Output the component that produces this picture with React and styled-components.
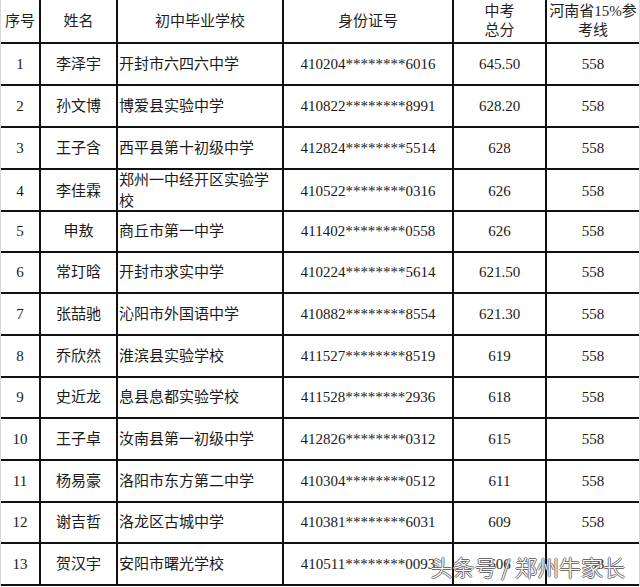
import React from "react";
import styled, { createGlobalStyle } from "styled-components";

const Global = createGlobalStyle`
  html, body { margin: 0; padding: 0; background: #fff; }
  body { font-family: "Liberation Serif", "Noto Sans CJK SC", serif; }
`;

const Page = styled.div`
  position: relative;
  width: 640px;
  height: 587px;
  overflow: hidden;
  background: #fff;
`;

const Table = styled.div`
  display: flex;
  flex-direction: column;
  border-left: 1px solid #d8d8d8;
  border-right: 1px solid #d8d8d8;
  box-sizing: border-box;
  width: 640px;
`;

const Row = styled.div`
  display: grid;
  grid-template-columns: 40px 77px 166px 170px 93px 1fr;
  height: ${(p) => p.$h}px;
  border-bottom: 2px solid #111;
  box-sizing: border-box;
`;

const Cell = styled.div`
  box-sizing: border-box;
  border-right: 2px solid #111;
  display: flex;
  align-items: center;
  justify-content: ${(p) => (p.$left ? "flex-start" : "center")};
  padding-left: ${(p) => (p.$left ? "1px" : "0")};
  text-align: ${(p) => (p.$left ? "left" : "center")};
  font-size: 15px;
  line-height: 21px;
  color: #1a1a1a;
  font-family: "Liberation Serif", "Noto Sans CJK SC", serif;
  overflow: visible;
  &:last-child { border-right: none; }
`;

const HeadCell = styled(Cell)`
  line-height: 19px;
  color: #1e1e1e;
`;

const Watermark = styled.div`
  position: absolute;
  right: 15px;
  bottom: 5px;
  font-family: "Noto Sans CJK SC", sans-serif;
  font-weight: 300;
  font-size: 22px;
  letter-spacing: 0;
  color: #fff;
  text-shadow: 1px 0 0 #6e6e6e, -1px 0 0 #6e6e6e, 0 1px 0 #6e6e6e, 0 -1px 0 #6e6e6e;
  pointer-events: none;
  white-space: nowrap;
`;

const rows = [
  ["1", "李泽宇", "开封市六四六中学", "410204********6016", "645.50", "558"],
  ["2", "孙文博", "博爱县实验中学", "410822********8991", "628.20", "558"],
  ["3", "王子含", "西平县第十初级中学", "412824********5514", "628", "558"],
  ["4", "李佳霖", "郑州一中经开区实验学校", "410522********0316", "626", "558"],
  ["5", "申敖", "商丘市第一中学", "411402********0558", "626", "558"],
  ["6", "常玎晗", "开封市求实中学", "410224********5614", "621.50", "558"],
  ["7", "张喆驰", "沁阳市外国语中学", "410882********8554", "621.30", "558"],
  ["8", "乔欣然", "淮滨县实验学校", "411527********8519", "619", "558"],
  ["9", "史近龙", "息县息都实验学校", "411528********2936", "618", "558"],
  ["10", "王子卓", "汝南县第一初级中学", "412826********0312", "615", "558"],
  ["11", "杨易豪", "洛阳市东方第二中学", "410304********0512", "611", "558"],
  ["12", "谢吉哲", "洛龙区古城中学", "410381********6031", "609", "558"],
  ["13", "贺汉宇", "安阳市曙光学校", "410511********0093", "606", "558"],
];

const heights = [42, 42, 42, 42, 41, 41, 42, 42, 41, 42, 42, 41, 42];

export default function App() {
  return (
    <Page>
      <Global />
      <Table>
        <Row $h={44}>
          <HeadCell>序号</HeadCell>
          <HeadCell>姓名</HeadCell>
          <HeadCell>初中毕业学校</HeadCell>
          <HeadCell>身份证号</HeadCell>
          <HeadCell>
            中考
            <br />
            总分
          </HeadCell>
          <HeadCell>河南省15%参考线</HeadCell>
        </Row>
        {rows.map((r, i) => (
          <Row key={r[0]} $h={heights[i]}>
            <Cell>{r[0]}</Cell>
            <Cell>{r[1]}</Cell>
            <Cell $left>{r[2]}</Cell>
            <Cell>{r[3]}</Cell>
            <Cell>{r[4]}</Cell>
            <Cell>{r[5]}</Cell>
          </Row>
        ))}
      </Table>
      <Watermark>头条号 / 郑州牛家长</Watermark>
    </Page>
  );
}
